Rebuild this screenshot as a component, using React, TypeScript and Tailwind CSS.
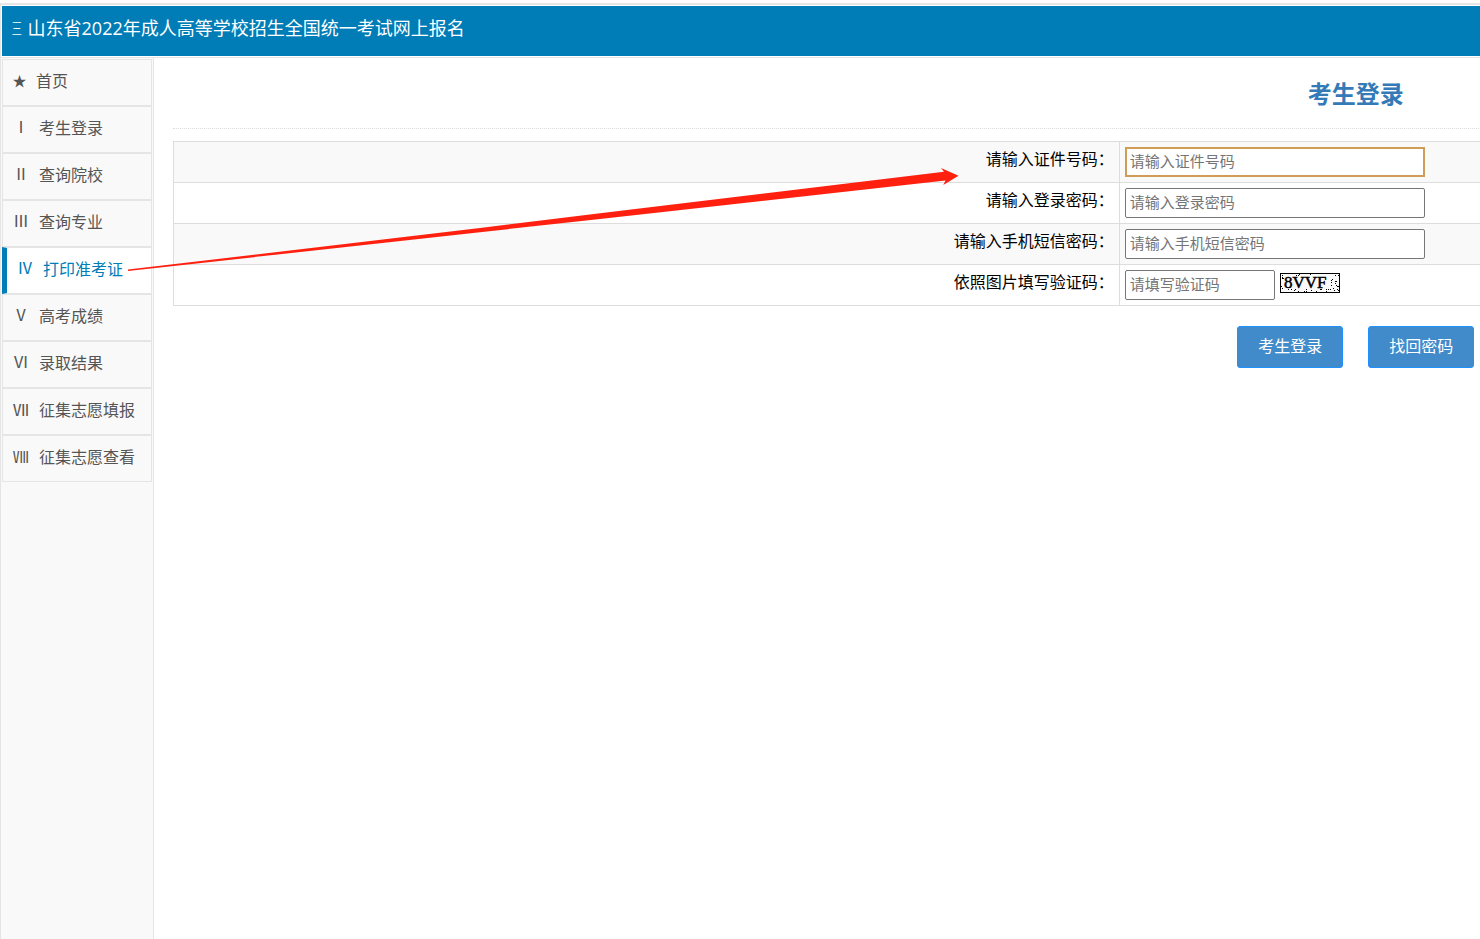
import React from "react";

type MenuItem = { mark: string; label: string; kind?: "star" | "dense"; active?: boolean };

const menu: MenuItem[] = [
  { mark: "★", label: "首页", kind: "star" },
  { mark: "Ⅰ", label: "考生登录" },
  { mark: "Ⅱ", label: "查询院校" },
  { mark: "Ⅲ", label: "查询专业" },
  { mark: "Ⅳ", label: "打印准考证", active: true },
  { mark: "Ⅴ", label: "高考成绩" },
  { mark: "Ⅵ", label: "录取结果" },
  { mark: "Ⅶ", label: "征集志愿填报", kind: "dense" },
  { mark: "Ⅷ", label: "征集志愿查看", kind: "dense" },
];

const markStyle = {
  star: "w-[13px] text-sm",
  dense: "w-4",
  plain: "w-4 font-['DejaVu_Sans_Mono','Noto_Sans_CJK_SC',sans-serif]",
};

const fields = [
  { id: "id-number", label: "请输入证件号码：", hint: "请输入证件号码", type: "text" },
  { id: "password", label: "请输入登录密码：", hint: "请输入登录密码", type: "password" },
  { id: "sms", label: "请输入手机短信密码：", hint: "请输入手机短信密码", type: "password" },
  { id: "captcha", label: "依照图片填写验证码：", hint: "请填写验证码", type: "text" },
];

// Speckles scattered over the verification picture, from a small fixed-seed generator.
const speckles = (() => {
  let seed = 20;
  const next = () => {
    seed = (seed * 48271) % 2147483647;
    return seed / 2147483647;
  };
  return Array.from({ length: 80 }, () => ({
    x: 1 + Math.floor(next() * 58),
    y: 1 + Math.floor(next() * 18),
  })).filter((s) => s.x > 50 || s.x < 4 || s.y < 3 || s.y > 15);
})();

function Captcha() {
  return (
    <svg width="60" height="20" viewBox="0 0 60 20" role="img" aria-label="验证码" className="mt-[3px] shrink-0">
      <rect x="0.5" y="0.5" width="59" height="19" fill="#fafafa" stroke="#000" />
      <text x="4" y="15" fontSize="17" fontFamily="Liberation Serif, serif" fill="#000" stroke="#000" strokeWidth="0.5">
        8VVF
      </text>
      {speckles.map((s, i) => (
        <rect key={i} x={s.x} y={s.y} width="1" height="1" fill="#000" />
      ))}
    </svg>
  );
}

function Arrow() {
  return (
    <svg
      className="pointer-events-none absolute left-32 top-[167px]"
      width="832"
      height="105"
      viewBox="128 167 832 105"
      aria-hidden="true"
    >
      <path
        d="M128 269.6 L480 228 L600 213.2 L944 171.8 L941 168 L958.5 175.7 L943.3 185 L945.5 180.4 L600 219 L480 232.2 L128 271 Z"
        fill="#ff2010"
      />
    </svg>
  );
}

function Sidebar() {
  return (
    <nav className="w-[154px] shrink-0 border-x border-[#e5e5e5] bg-[#f9f9f9] p-px">
      <ul>
        {menu.map((item) => (
          <li key={item.label}>
            <a
              href="#"
              className={
                item.active
                  ? "flex h-[47px] items-center gap-[10px] border border-l-[5px] border-[#e5e5e5] border-l-[#007cb7] bg-white pb-[3px] pl-[10px] text-[#007cb7]"
                  : "flex h-[47px] items-center gap-[10px] border border-[#e5e5e5] pb-[3px] pl-[10px] text-[#555]"
              }
            >
              <span className={"flex justify-center whitespace-nowrap " + markStyle[item.kind ?? "plain"]}>{item.mark}</span>
              <span>{item.label}</span>
            </a>
          </li>
        ))}
      </ul>
    </nav>
  );
}

function LoginForm() {
  return (
    <form className="w-[181%]" onSubmit={(e) => e.preventDefault()}>
      <h1 className="border-b border-dotted border-[#ddd] pb-4 pt-[18px] text-center text-2xl leading-9 font-bold text-[#337ab7]">
        考生登录
      </h1>
      <table className="mt-3 w-full table-fixed border-collapse">
        <tbody>
          {fields.map((f, i) => (
            <tr key={f.id} className="border border-[#ddd] odd:bg-[#f9f9f9]">
              <th scope="row" className="w-2/5 border-r border-[#ddd] p-[5px] text-right align-top leading-6 font-normal text-black">
                <label htmlFor={f.id}>{f.label}</label>
              </th>
              <td className="p-[5px]">
                <div className="flex items-start gap-[5px]">
                  <input
                    id={f.id}
                    type={f.type}
                    placeholder={f.hint}
                    className={
                      i === 0
                        ? "h-[30px] w-[300px] border-2 border-[#d09c56] bg-white px-[3px] pb-[2px] text-[15px] outline-none placeholder:text-[#757575]"
                        : f.id === "captcha"
                          ? "h-[30px] w-[150px] rounded-[2px] border border-[#767676] bg-white px-1 pb-[2px] text-[15px] outline-none placeholder:text-[#757575]"
                          : "h-[30px] w-[300px] rounded-[2px] border border-[#767676] bg-white px-1 pb-[2px] text-[15px] outline-none placeholder:text-[#757575]"
                    }
                  />
                  {f.id === "captcha" && <Captcha />}
                </div>
              </td>
            </tr>
          ))}
        </tbody>
      </table>
      <div className="mt-5 flex justify-center gap-[25px]">
        <button type="submit" className="h-[42px] w-[106px] rounded-[3px] border border-[#1e90ff] bg-[#428bca] pb-[2px] text-white">
          考生登录
        </button>
        <button type="button" className="h-[42px] w-[106px] rounded-[3px] border border-[#1e90ff] bg-[#428bca] pb-[2px] text-white">
          找回密码
        </button>
      </div>
    </form>
  );
}

export default function App() {
  return (
    <div className="relative flex min-h-screen flex-col overflow-hidden bg-white pt-[3px] font-['Open_Sans','Noto_Sans_CJK_SC',sans-serif] text-base">
      <header className="border-b border-l border-t-2 border-[#e5e5e5]">
        <div className="my-px ml-px flex h-[50px] gap-[6px] bg-[#007cb7] pl-[10px] text-lg leading-[44px] text-white">
          <span className="font-light">Ξ</span>
          <span>山东省2022年成人高等学校招生全国统一考试网上报名</span>
        </div>
      </header>
      <div className="flex grow">
        <Sidebar />
        <main className="min-w-0 grow overflow-hidden pl-[19px]">
          <LoginForm />
        </main>
      </div>
      <Arrow />
    </div>
  );
}
